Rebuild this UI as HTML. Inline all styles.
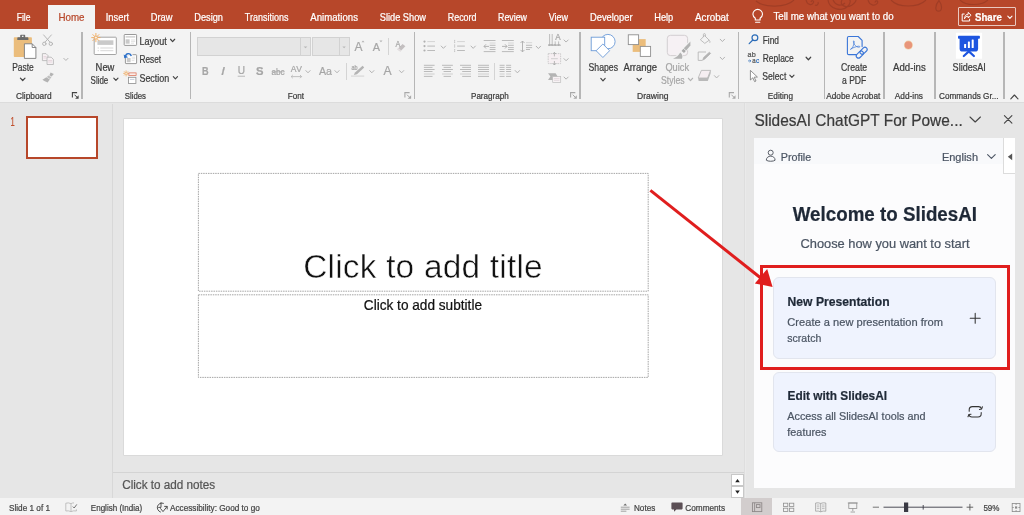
<!DOCTYPE html>
<html lang="en">
<head>
<meta charset="utf-8">
<title>PowerPoint - SlidesAI</title>
<style>
html,body{margin:0;padding:0;}
body{width:1024px;height:515px;position:relative;overflow:hidden;background:#e6e6e6;font-family:"Liberation Sans",sans-serif;}
.a{position:absolute;}
.t{position:absolute;left:0;top:0;white-space:pre;transform-origin:0 0;-webkit-text-stroke:0.9px;font-family:"Liberation Sans",sans-serif;}
svg{position:absolute;overflow:visible;}
#tabbar{left:0;top:0;width:1024px;height:29px;background:#b7472a;}
#hometab{left:48.3px;top:5px;width:46.7px;height:25px;background:#f3f3f3;}
#ribbon{left:0;top:29px;width:1024px;height:72.6px;background:#f3f3f3;border-bottom:1px solid #dcdcdc;}
.gs{position:absolute;top:31.5px;width:1.4px;height:67.3px;background:#b6b6b6;}
.ss{position:absolute;width:1px;background:#d4d4d4;}
#share{left:958.2px;top:7.2px;width:55.6px;height:16.8px;border:1px solid rgba(255,255,255,.7);border-radius:1px;}
.fbox{position:absolute;top:37px;height:18.7px;background:#e6e6e6;border:1px solid #d2d2d2;box-sizing:border-box;}
#thumbdiv{left:112.2px;top:104px;width:1px;height:394px;background:#d8d8d8;}
#thumb{left:26px;top:116px;width:72px;height:42.5px;box-sizing:border-box;border:2px solid #b7472a;background:#fff;}
#slide{left:123.6px;top:118.9px;width:598.4px;height:336px;background:#fff;box-shadow:0 0 0 .6px #d2d2d2;}
.ph{position:absolute;box-sizing:border-box;border:1px dashed #9a9a9a;}
#notesline{left:113px;top:471.6px;width:631.6px;height:1px;background:#d4d4d4;}
.sb{position:absolute;left:730.8px;width:13.4px;height:11.6px;background:#fff;border:1px solid #c8c8c8;box-sizing:border-box;}
#panediv{left:744.3px;top:103px;width:1.2px;height:395px;background:#dedede;box-shadow:1px 0 0 #eaeaea;}
#status{left:0;top:498px;width:1024px;height:17px;background:#f3f3f3;}
#viewsel{left:740.8px;top:498px;width:31.4px;height:17px;background:#d2cdcd;}
#pane{left:754.3px;top:138px;width:261px;height:350px;background:#fcfcfd;}
#panehead{left:754.3px;top:138px;width:248.5px;height:26px;background:#f8f9fb;}
#handle{left:1002.6px;top:138.3px;width:12.6px;height:35.6px;background:#fff;border-left:1px solid #dcdcdc;border-bottom:1px solid #dcdcdc;box-sizing:border-box;}
.card{position:absolute;left:773.3px;width:223.2px;background:#eff3fe;border:1px solid #e2e5ee;border-radius:6px;box-sizing:border-box;}
#redbox{left:760px;top:264.7px;width:250.4px;height:105.6px;box-sizing:border-box;border:3px solid #e01e1e;}
</style>
</head>
<body>
<div class="a" id="tabbar"></div>
<div class="a" id="hometab"></div>
<div class="a" id="ribbon"></div>
<div class="a" id="share"></div>
<!-- group separators -->
<div class="gs" style="left:81.2px"></div>
<div class="gs" style="left:189.9px"></div>
<div class="gs" style="left:413.6px"></div>
<div class="gs" style="left:579.3px"></div>
<div class="gs" style="left:738px"></div>
<div class="gs" style="left:823.6px"></div>
<div class="gs" style="left:883.2px"></div>
<div class="gs" style="left:934.2px"></div>
<div class="gs" style="left:1003.2px"></div>
<div class="ss" style="left:388.2px;top:38px;height:17px"></div>
<div class="ss" style="left:346.2px;top:63px;height:16.6px"></div>
<div class="ss" style="left:494.2px;top:63px;height:17px"></div>
<!-- font boxes -->
<div class="fbox" style="left:197px;width:113.8px"></div>
<div class="ss" style="left:300.2px;top:38px;height:16.7px;background:#d2d2d2"></div>
<div class="fbox" style="left:312px;width:37.6px"></div>
<div class="ss" style="left:339.2px;top:38px;height:16.7px;background:#d2d2d2"></div>
<!-- workspace -->
<div class="a" id="thumbdiv"></div>
<div class="a" id="thumb"></div>
<div class="a" id="slide"></div>
<div class="a" id="notesline"></div>
<div class="sb" style="top:474.4px"></div>
<div class="sb" style="top:486.2px"></div>
<div class="a" id="panediv"></div>
<!-- task pane -->
<div class="a" id="pane"></div>
<div class="a" id="panehead"></div>
<div class="a" id="handle"></div>
<div class="card" style="top:277.2px;height:81.8px"></div>
<div class="card" style="top:371.6px;height:80.8px"></div>
<div class="a" id="redbox"></div>
<!-- status bar -->
<div class="a" id="status"></div>
<div class="a" id="viewsel"></div>
<svg width="1024" height="515" viewBox="0 0 1024 515" style="left:0;top:0">
<g fill="none" stroke="#9d3c25" stroke-width="1.2" opacity="0.85"><path d="M756 1 C764 8 786 8 794 0"/><path d="M806 0 C807 5 812 6 813.5 2.5 C814 0.5 811.5 0 811 2"/><path d="M815 5 C817 6 819 4 818 2"/><path d="M828 0 C829 9 842 13 849 5 C853 -1 846 -5 842 0 C839 5 846 9 852 5 C856 2 856 0 856 0"/><path d="M833 0 C835 5 841 7 845 3"/><path d="M868 0 C869 5 875 7 877.5 3 C878.5 0.5 875.5 0 875 2.5"/><path d="M891 0 C898 8 918 8 926 0"/><path d="M939 0.5 C934.6 5.5 935 11.2 938.6 11.2 C942.2 11.2 942.6 5.5 939 0.5 Z"/><path d="M960 0 C966 6 981 6 988 0"/></g>
<g fill="none" stroke="#fff" stroke-width="1.1" stroke-linecap="round"><path d="M755.3 18.2 C753.3 16.6 752.9 15 752.9 14.2 A4.8 4.8 0 0 1 762.5 14.2 C762.5 15 762.1 16.6 760.1 18.2 V20 H755.3 Z"/><path d="M755.6 22.2 H759.8"/></g>
<g fill="none" stroke="#fff" stroke-width="1" stroke-linejoin="round" stroke-linecap="round"><path d="M964.2 14 H962.2 V21 H969.6 V19.2"/><path d="M964.6 18.4 C964.8 15.4 966.4 14.2 968.2 14.2 V12.4 L971 15.2 L968.2 18 V16.2 C966.6 16.2 965.4 16.8 964.6 18.4 Z"/></g>
<path d="M1007.80 16.10 L1009.90 18.30 L1012.00 16.10" fill="none" stroke="#fff" stroke-width="1.1" stroke-linecap="round" stroke-linejoin="round"/>
<rect x="13.8" y="37.2" width="18.1" height="19.8" rx="0.8" fill="#ebbd7c"/>
<path d="M17.3 40 V38 Q17.3 37.2 18.1 37.2 H20.2 V35.4 Q20.2 34.7 20.9 34.7 H24.5 Q25.2 34.7 25.2 35.4 V37.2 H27.6 Q28.4 37.2 28.4 38 V40 Z" fill="#6b6b6b"/>
<rect x="21.9" y="35.7" width="1.6" height="1.3" fill="#f3f3f3"/>
<path d="M24.4 43.8 H32.2 L35.9 47.5 V58.4 H24.4 Z" fill="#fff" stroke="#7a7a7a" stroke-width="0.9" stroke-linejoin="round"/>
<path d="M32.2 43.8 V47.5 H35.9" fill="none" stroke="#7a7a7a" stroke-width="0.9"/>
<path d="M20.40 78.10 L22.70 80.50 L25.00 78.10" fill="none" stroke="#444444" stroke-width="1.2" stroke-linecap="round" stroke-linejoin="round"/>
<g fill="none" stroke="#b3b3b3" stroke-width="0.95" stroke-linecap="round"><path d="M43.6 34.9 L50 42.2 M51.4 34.9 L45 42.2"/><circle cx="44.3" cy="43.8" r="1.7"/><circle cx="50.8" cy="43.8" r="1.7"/></g>
<g fill="#f6f1f3" stroke="#b3b3b3" stroke-width="0.8" stroke-linejoin="round"><path d="M42.4 53.6 H46 L48 55.6 V60.6 H42.4 Z"/><path d="M47 57.2 H51.2 L53.4 59.4 V64.5 H47 Z"/></g>
<path d="M43.5 56.5 H46.5 M43.5 58 H46.5 M48.2 60.5 H52 M48.2 62 H52" stroke="#d9bfc8" stroke-width="0.5"/>
<path d="M63.80 58.35 L65.90 60.45 L68.00 58.35" fill="none" stroke="#b3b3b3" stroke-width="1" stroke-linecap="round" stroke-linejoin="round"/>
<g fill="#b3b3b3" stroke="none"><path d="M50.6 72.4 L53.8 73.9 L51.6 76.6 L49.4 75.2 Z"/><path d="M48.6 75.4 L51.4 77.2 L50 79 L46.8 77 Z" opacity="0.8"/><path d="M46.4 77.3 L49.8 79.4 L47.6 82.4 Q44.6 81.6 42.4 79.8 Z"/></g>
<path d="M77.10 92.60 H72.40 V97.50" fill="none" stroke="#444" stroke-width="1.1"/>
<path d="M74.50 94.70 L77.30 97.50" fill="none" stroke="#444" stroke-width="1"/><path d="M78.60 95.30 V98.80 H75.10 Z" fill="#444"/>
<rect x="94.2" y="37.2" width="22.1" height="17.3" rx="0.8" fill="#fff" stroke="#9a9a9a" stroke-width="0.9"/>
<rect x="97.4" y="40.3" width="16" height="4.6" fill="#cacaca"/>
<path d="M97.6 48 H99 M100.3 48 H113.3 M97.6 50.7 H99 M100.3 50.7 H113.3" stroke="#c4c4c4" stroke-width="0.7"/>
<g stroke="#f0a95a" stroke-width="0.9" stroke-linecap="round"><path d="M95.9 33.4 V41.8 M91.7 37.6 H100.1 M92.9 34.6 L98.9 40.6 M98.9 34.6 L92.9 40.6"/></g><circle cx="95.9" cy="37.6" r="1.5" fill="#f3f3f3" stroke="#f0a95a" stroke-width="0.8"/>
<path d="M113.80 78.15 L115.90 80.45 L118.00 78.15" fill="none" stroke="#444444" stroke-width="1.15" stroke-linecap="round" stroke-linejoin="round"/>
<rect x="124.2" y="34.5" width="12.4" height="10.9" rx="0.7" fill="#fff" stroke="#8d8d8d" stroke-width="0.9"/>
<rect x="125.6" y="36" width="9.6" height="1.7" fill="#d6d6d6"/><rect x="125.6" y="39.3" width="4" height="4.4" fill="#c9c9c9"/><path d="M131 40 H135.2 M131 41.6 H135.2 M131 43.2 H134" stroke="#cfcfcf" stroke-width="0.6"/>
<path d="M170.50 39.25 L172.60 41.55 L174.70 39.25" fill="none" stroke="#444444" stroke-width="1.15" stroke-linecap="round" stroke-linejoin="round"/>
<rect x="125.4" y="54.7" width="11.2" height="8.9" rx="0.6" fill="#fff" stroke="#8d8d8d" stroke-width="0.9"/>
<rect x="126.8" y="58" width="3.8" height="4.2" fill="#c9c9c9"/><path d="M131.6 57.2 H135.2 M131.6 58.8 H135.2 M131.6 60.6 H134.4" stroke="#cfcfcf" stroke-width="0.6"/>
<path d="M124.6 57.4 C124.4 52.4 130.4 51.6 131.6 56.2" fill="none" stroke="#f3f3f3" stroke-width="3"/>
<path d="M125.6 56.6 C125.6 52.8 130.4 52.6 131.3 56" fill="none" stroke="#2a6fc9" stroke-width="1.4"/><path d="M123.7 54.4 L124.3 58.3 L128.2 57.3 Z" fill="#2a6fc9"/>
<g stroke="#f0a95a" stroke-width="0.7" stroke-linecap="round"><path d="M126.1 70.8 V76 M123.5 73.4 H128.7 M124.3 71.6 L127.9 75.2 M127.9 71.6 L124.3 75.2"/></g><circle cx="126.1" cy="73.4" r="1.1" fill="#f3f3f3" stroke="#f0a95a" stroke-width="0.6"/>
<rect x="128.9" y="72.9" width="7.2" height="2.5" fill="#fbeeea" stroke="#d9694c" stroke-width="0.7"/>
<rect x="128.4" y="77.3" width="7.5" height="6.1" fill="#fff" stroke="#8d8d8d" stroke-width="0.8"/><path d="M130 79.4 H134.4" stroke="#b8c2d0" stroke-width="0.8"/>
<path d="M173.30 76.65 L175.40 78.95 L177.50 76.65" fill="none" stroke="#444444" stroke-width="1.15" stroke-linecap="round" stroke-linejoin="round"/>
<path d="M303.6 46.4 H307.4 L305.5 48.2 Z M342.4 46.4 H345.8 L344.1 48.2 Z" fill="#b8b8b8"/>
<path d="M361.5 42.2 L363 40.6 L364.5 42.2 Z M379.4 40.6 H382.5 L380.95 42.3 Z" fill="#b3b3b3"/>
<path d="M397.3 49.2 L402.6 43.9 L405.4 46.2 L400.2 51.6 Z" fill="#c3bfc0"/><path d="M397.3 49.2 L398.5 48 L401.4 50.4 L400.2 51.6 Z" fill="#e4dfe1"/>
<path d="M291.2 76.6 H301.6 M292.8 75 L291.2 76.6 L292.8 78.2 M300 75 L301.6 76.6 L300 78.2" fill="none" stroke="#b3b3b3" stroke-width="0.8"/>
<path d="M305.90 70.60 L308.00 72.80 L310.10 70.60" fill="none" stroke="#b3b3b3" stroke-width="1" stroke-linecap="round" stroke-linejoin="round"/>
<path d="M334.90 70.60 L337.00 72.80 L339.10 70.60" fill="none" stroke="#b3b3b3" stroke-width="1" stroke-linecap="round" stroke-linejoin="round"/>
<path d="M353.8 75 L355 72.6 L362.6 65.8 L364.2 67.4 L357 74.2 Z" fill="#b3b3b3"/><rect x="351" y="75.3" width="13.2" height="1.6" fill="#dedede"/>
<path d="M369.70 70.60 L371.80 72.80 L373.90 70.60" fill="none" stroke="#b3b3b3" stroke-width="1" stroke-linecap="round" stroke-linejoin="round"/>
<path d="M399.50 70.60 L401.60 72.80 L403.70 70.60" fill="none" stroke="#b3b3b3" stroke-width="1" stroke-linecap="round" stroke-linejoin="round"/>
<path d="M409.60 92.60 H404.90 V97.50" fill="none" stroke="#a8a8a8" stroke-width="1.1"/>
<path d="M407.00 94.70 L409.80 97.50" fill="none" stroke="#a8a8a8" stroke-width="1"/><path d="M411.10 95.30 V98.80 H407.60 Z" fill="#a8a8a8"/>
<circle cx="424.5" cy="41.6" r="1.1" fill="#b0b0b0"/>
<circle cx="424.5" cy="46.1" r="1.1" fill="#b0b0b0"/>
<circle cx="424.5" cy="50.5" r="1.1" fill="#b0b0b0"/>
<path d="M427.30 41.60 H435.00" stroke="#d0d0d0" stroke-width="0.9" fill="none"/>
<path d="M427.30 46.10 H435.00 M427.30 50.50 H435.00" stroke="#b4b4b4" stroke-width="0.9" fill="none"/>
<path d="M441.20 46.05 L443.40 48.35 L445.60 46.05" fill="none" stroke="#b3b3b3" stroke-width="1" stroke-linecap="round" stroke-linejoin="round"/>
<path d="M454.00 40.40 H455.20 M454.00 42.60 H455.20 M454.00 45.00 H455.20 M454.00 47.00 H455.20 M454.00 49.60 H455.20 M454.00 51.60 H455.20" stroke="#bdbdbd" stroke-width="0.6" fill="none"/>
<path d="M454.6 40 V43 M454.6 44.6 V47.4 M454.6 49.2 V52" stroke="#c0c0c0" stroke-width="0.6"/>
<path d="M457.10 41.60 H464.90" stroke="#d0d0d0" stroke-width="0.9" fill="none"/>
<path d="M457.10 46.10 H464.90 M457.10 50.50 H464.90" stroke="#b4b4b4" stroke-width="0.9" fill="none"/>
<path d="M471.00 46.05 L473.20 48.35 L475.40 46.05" fill="none" stroke="#b3b3b3" stroke-width="1" stroke-linecap="round" stroke-linejoin="round"/>
<path d="M483.70 40.50 H495.50 M483.70 51.60 H495.50" stroke="#b4b4b4" stroke-width="0.9" fill="none"/>
<path d="M489.70 43.00 H495.50" stroke="#d4d4d4" stroke-width="0.9" fill="none"/>
<path d="M489.70 45.30 H495.50 M489.70 47.60 H495.50 M489.70 49.50 H495.50" stroke="#b4b4b4" stroke-width="0.9" fill="none"/>
<path d="M484 46.4 H489 M486 44.3 L484 46.4 L486 48.5" fill="none" stroke="#adadad" stroke-width="0.9"/>
<path d="M501.90 40.50 H513.80 M501.90 51.60 H513.80" stroke="#b4b4b4" stroke-width="0.9" fill="none"/>
<path d="M508.00 43.00 H513.80" stroke="#d4d4d4" stroke-width="0.9" fill="none"/>
<path d="M508.00 45.30 H513.80 M508.00 47.60 H513.80 M508.00 49.50 H513.80" stroke="#b4b4b4" stroke-width="0.9" fill="none"/>
<path d="M502 46.4 H507 M505 44.3 L507 46.4 L505 48.5" fill="none" stroke="#adadad" stroke-width="0.9"/>
<path d="M522.5 41 V51.9 M520.5 43 L522.5 41 L524.5 43 M520.5 49.9 L522.5 51.9 L524.5 49.9" fill="none" stroke="#adadad" stroke-width="0.9"/>
<path d="M526.00 42.70 H532.10" stroke="#d4d4d4" stroke-width="0.9" fill="none"/>
<path d="M526.00 45.30 H532.10 M526.00 47.60 H532.10" stroke="#b4b4b4" stroke-width="0.9" fill="none"/>
<path d="M526.00 49.50 H530.00" stroke="#b4b4b4" stroke-width="0.9" fill="none"/>
<path d="M536.20 46.25 L538.40 48.55 L540.60 46.25" fill="none" stroke="#b3b3b3" stroke-width="1" stroke-linecap="round" stroke-linejoin="round"/>
<path d="M423.90 65.30 H434.60 M423.90 69.50 H434.60" stroke="#b4b4b4" stroke-width="0.9" fill="none"/>
<path d="M423.90 67.40 H432.50 M423.90 71.50 H432.50 M423.90 76.40 H432.50" stroke="#b4b4b4" stroke-width="0.9" fill="none"/>
<path d="M423.90 74.00 H434.60" stroke="#d6d6d6" stroke-width="1.2" fill="none"/>
<path d="M442.00 65.30 H452.90 M442.00 69.50 H452.90" stroke="#b4b4b4" stroke-width="0.9" fill="none"/>
<path d="M443.60 67.40 H451.00 M443.60 71.50 H451.00 M443.60 76.40 H451.00" stroke="#b4b4b4" stroke-width="0.9" fill="none"/>
<path d="M442.00 74.00 H452.90" stroke="#d6d6d6" stroke-width="1.2" fill="none"/>
<path d="M460.00 65.30 H471.00 M460.00 69.50 H471.00" stroke="#b4b4b4" stroke-width="0.9" fill="none"/>
<path d="M462.20 67.40 H471.00 M462.20 71.50 H471.00 M462.20 76.40 H471.00" stroke="#b4b4b4" stroke-width="0.9" fill="none"/>
<path d="M460.00 74.00 H471.00" stroke="#d6d6d6" stroke-width="1.2" fill="none"/>
<path d="M478.00 65.30 H489.00 M478.00 69.50 H489.00" stroke="#b4b4b4" stroke-width="0.9" fill="none"/>
<path d="M478.00 67.40 H489.00 M478.00 71.50 H489.00 M478.00 76.40 H489.00" stroke="#b4b4b4" stroke-width="0.9" fill="none"/>
<path d="M478.00 74.00 H489.00" stroke="#d6d6d6" stroke-width="1.2" fill="none"/>
<path d="M499.60 65.30 H504.60 M499.60 67.40 H504.60 M499.60 69.50 H504.60 M499.60 71.50 H504.60 M499.60 76.40 H504.60" stroke="#b4b4b4" stroke-width="0.9" fill="none"/>
<path d="M499.60 74.00 H504.60" stroke="#d6d6d6" stroke-width="1.2" fill="none"/>
<path d="M506.10 65.30 H511.10 M506.10 67.40 H511.10 M506.10 69.50 H511.10 M506.10 71.50 H511.10 M506.10 76.40 H511.10" stroke="#b4b4b4" stroke-width="0.9" fill="none"/>
<path d="M506.10 74.00 H511.10" stroke="#d6d6d6" stroke-width="1.2" fill="none"/>
<path d="M515.20 70.55 L517.40 72.85 L519.60 70.55" fill="none" stroke="#b3b3b3" stroke-width="1" stroke-linecap="round" stroke-linejoin="round"/>
<path d="M549.6 34 V45.6 M552.2 34 V45.6 M555.2 41.4 V45.6 M558.6 41.4 V45.6" stroke="#b0b0b0" stroke-width="0.8" fill="none"/>
<path d="M548 45.2 H560.8" stroke="#a8a8a8" stroke-width="1"/>
<path d="M548.6 44 L549.6 45.4 L550.6 44 M551.2 44 L552.2 45.4 L553.2 44 M554.2 44 L555.2 45.4 L556.2 44 M557.6 44 L558.6 45.4 L559.6 44" fill="none" stroke="#a8a8a8" stroke-width="0.7"/>
<path d="M564.00 39.95 L566.10 42.05 L568.20 39.95" fill="none" stroke="#b3b3b3" stroke-width="1" stroke-linecap="round" stroke-linejoin="round"/>
<rect x="548.2" y="53.6" width="12.4" height="10" fill="#f6eff2" stroke="#bdbdbd" stroke-width="0.7" stroke-dasharray="1.6 0.8"/>
<path d="M554.4 52.4 V56.4 M552.8 54 L554.4 52.4 L556 54 M554.4 61 V65 M552.8 63.4 L554.4 65 L556 63.4" fill="none" stroke="#a8a8a8" stroke-width="0.8"/><path d="M551 58.7 H557.8" stroke="#cfcfcf" stroke-width="1"/>
<path d="M564.00 58.65 L566.10 60.75 L568.20 58.65" fill="none" stroke="#b3b3b3" stroke-width="1" stroke-linecap="round" stroke-linejoin="round"/>
<path d="M548 73.2 H555.6 L557.6 76.5 L555.6 79.9 H548 L550.4 76.5 Z" fill="#b4b4b4"/><rect x="552.7" y="76.6" width="8" height="5.8" fill="#f7f2f4" stroke="#bdbdbd" stroke-width="0.7"/><path d="M554 78.6 H559.4 M554 80.4 H559.4" stroke="#d2c4ca" stroke-width="0.5"/>
<path d="M564.00 77.05 L566.10 79.15 L568.20 77.05" fill="none" stroke="#b3b3b3" stroke-width="1" stroke-linecap="round" stroke-linejoin="round"/>
<path d="M575.30 92.60 H570.60 V97.50" fill="none" stroke="#a8a8a8" stroke-width="1.1"/>
<path d="M572.70 94.70 L575.50 97.50" fill="none" stroke="#a8a8a8" stroke-width="1"/><path d="M576.80 95.30 V98.80 H573.30 Z" fill="#a8a8a8"/>
<circle cx="607.9" cy="41.6" r="7.2" fill="#fff" stroke="#6c9bd8" stroke-width="0.9"/>
<rect x="591.2" y="37.2" width="13.5" height="13.5" fill="#fff" stroke="#6c9bd8" stroke-width="0.9"/>
<path d="M602.9 44 L609.6 50.7 L602.9 57.5 L596.1 50.7 Z" fill="#fff" stroke="#6c9bd8" stroke-width="0.9" stroke-linejoin="round"/>
<path d="M600.80 78.40 L603.00 80.80 L605.20 78.40" fill="none" stroke="#444444" stroke-width="1.2" stroke-linecap="round" stroke-linejoin="round"/>
<rect x="632.7" y="39.1" width="13" height="12.8" fill="#ebbd7c"/>
<rect x="628.3" y="34.8" width="10.3" height="9.8" fill="#fff" stroke="#8f8f8f" stroke-width="0.9"/>
<rect x="640.3" y="46.4" width="10.3" height="10" fill="#fff" stroke="#8f8f8f" stroke-width="0.9"/>
<path d="M637.00 78.40 L639.20 80.80 L641.40 78.40" fill="none" stroke="#444444" stroke-width="1.2" stroke-linecap="round" stroke-linejoin="round"/>
<rect x="667.3" y="35.3" width="20.3" height="20.3" rx="3.2" fill="#f6f1f4" stroke="#cfcbcd" stroke-width="0.9"/>
<g stroke="#f3f3f3" stroke-width="1.8" stroke-linejoin="round" fill="#f3f3f3"><path d="M690.4 41.4 V45.6 L686.2 50.4 L683.8 48.2 Z"/><path d="M683.4 48.8 L685.8 50.9 L684 53.1 L681.6 51 Z"/><path d="M673 58.7 Q678 56.6 680.2 52.4 Q683.4 54.6 682 58.7 Z"/></g>
<path d="M690.4 41.4 V45.6 L686.2 50.4 L683.8 48.2 Z" fill="#b2b2b2"/><path d="M683.4 48.8 L685.8 50.9 L684 53.1 L681.6 51 Z" fill="#a8a8a8"/><path d="M673 58.7 Q678 56.6 680.2 52.4 Q683.4 54.6 682 58.7 Z" fill="#b4b4b4"/>
<path d="M688.35 78.25 L690.50 80.55 L692.65 78.25" fill="none" stroke="#b3b3b3" stroke-width="1.1" stroke-linecap="round" stroke-linejoin="round"/>
<g fill="none" stroke="#b3b3b3" stroke-width="0.85" stroke-linejoin="round"><path d="M704.6 35.6 L709.2 40.2 L704.8 43.4 L700.4 39.8 Z"/><path d="M703.4 37 V34.6 Q703.4 33.6 704.4 33.6 Q705.4 33.6 705.4 34.6 V36.4"/><path d="M709.2 40.2 Q710.4 41.6 709.8 42.8"/></g>
<path d="M720.20 39.25 L722.40 41.55 L724.60 39.25" fill="none" stroke="#b3b3b3" stroke-width="1" stroke-linecap="round" stroke-linejoin="round"/>
<g fill="none" stroke="#b3b3b3" stroke-width="0.85" stroke-linejoin="round"><path d="M706 52 H698.2 V60.4 H702.6"/><path d="M702.8 60 L703.6 57.6 L709.4 52.2 L710.6 53.4 L704.8 59 Z" fill="#b3b3b3"/></g>
<path d="M720.20 57.25 L722.40 59.55 L724.60 57.25" fill="none" stroke="#b3b3b3" stroke-width="1" stroke-linecap="round" stroke-linejoin="round"/>
<path d="M701.4 70.4 H710.6 L707.6 78 H698.2 Z" fill="#f5eef1" stroke="#b3b3b3" stroke-width="0.8" stroke-linejoin="round"/><path d="M698.2 78 H707.6 L710.6 70.4 V73.4 L707.8 81 H698.6 Z" fill="#b9b9b9"/>
<path d="M714.40 75.65 L716.60 77.95 L718.80 75.65" fill="none" stroke="#b3b3b3" stroke-width="1" stroke-linecap="round" stroke-linejoin="round"/>
<path d="M734.00 92.60 H729.30 V97.50" fill="none" stroke="#a8a8a8" stroke-width="1.1"/>
<path d="M731.40 94.70 L734.20 97.50" fill="none" stroke="#a8a8a8" stroke-width="1"/><path d="M735.50 95.30 V98.80 H732.00 Z" fill="#a8a8a8"/>
<g fill="none" stroke="#2b6cb8" stroke-width="1.2" stroke-linecap="round"><circle cx="754.9" cy="37.7" r="2.9"/><path d="M752.8 40 L749.2 43.7"/></g>
<path d="M748 60.9 H750.8 M749.6 59.7 L750.9 60.9 L749.6 62.1" fill="none" stroke="#2b6cb8" stroke-width="0.7"/>
<path d="M806.10 57.25 L808.40 59.75 L810.70 57.25" fill="none" stroke="#444444" stroke-width="1.2" stroke-linecap="round" stroke-linejoin="round"/>
<path d="M750.4 70.4 V80 L752.8 77.8 L754.6 81.6 L756 81 L754.2 77.2 L757.4 77 Z" fill="#fff" stroke="#777" stroke-width="0.8" stroke-linejoin="round"/>
<path d="M789.80 75.05 L791.90 77.35 L794.00 75.05" fill="none" stroke="#444444" stroke-width="1.15" stroke-linecap="round" stroke-linejoin="round"/>
<path d="M856.4 54.6 H848.8 Q847.4 54.6 847.4 53.2 V37.9 Q847.4 36.5 848.8 36.5 H858.2 L862.1 40.4 V46.6" fill="none" stroke="#3a76d8" stroke-width="1.1" stroke-linejoin="round" stroke-linecap="round"/>
<path d="M850.4 49.4 C852.6 48.6 854.2 44.4 854.2 41.6 C854.2 40.4 853.2 40.6 853.4 41.8 C853.8 44.6 856.6 47.6 859.4 47.2 C860.4 46.9 859.6 46 858.4 46.2 C855.6 46.6 852.2 48 850.4 49.4 Z" fill="none" stroke="#3a76d8" stroke-width="0.7"/>
<g fill="none" stroke="#3a76d8" stroke-width="1.1"><rect x="-2.2" y="-4.1" width="4.4" height="8.2" rx="2.2" transform="translate(863.6 50.8) rotate(45)"/><rect x="-2.2" y="-4.1" width="4.4" height="8.2" rx="2.2" transform="translate(859.8 54.6) rotate(45)"/></g>
<circle cx="908.4" cy="45.1" r="4.5" fill="#f0b46a" opacity="0.55"/><circle cx="908.4" cy="45.1" r="3.8" fill="#e8957a"/>
<rect x="955.9" y="32.7" width="26.2" height="26" fill="#fff"/>
<rect x="958" y="35.7" width="21.9" height="3" rx="0.8" fill="#1d55e0"/><path d="M959.6 38 H978.1 V48.4 Q978.1 51.6 974.9 51.6 H962.8 Q959.6 51.6 959.6 48.4 Z" fill="#1d55e0"/>
<path d="M963.8 56 L968.85 51.4 L973.9 56" fill="none" stroke="#1d55e0" stroke-width="2.2" stroke-linecap="round" stroke-linejoin="round"/>
<rect x="964.1" y="44" width="2" height="4" rx="0.5" fill="#fff"/><rect x="967.9" y="41.6" width="2" height="6.4" rx="0.5" fill="#fff"/><rect x="971.7" y="39.6" width="2" height="8.4" rx="0.5" fill="#fff"/>
<path d="M1010.8 98.8 L1014.4 95 L1018 98.8" fill="none" stroke="#444444" stroke-width="1.1" stroke-linecap="round" stroke-linejoin="round"/>
<path d="M735.2 482.2 L737.5 479 L739.8 482.2 Z M735.2 490.6 H739.8 L737.5 493.8 Z" fill="#222"/>
<path d="M970 117 L975.2 122 L980.4 117" fill="none" stroke="#444" stroke-width="1.1" stroke-linecap="round" stroke-linejoin="round"/>
<path d="M1004.4 115.6 L1011.9 123.1 M1011.9 115.6 L1004.4 123.1" fill="none" stroke="#444" stroke-width="1.1" stroke-linecap="round"/>
<g fill="none" stroke="#5a5f68" stroke-width="1"><circle cx="770.7" cy="152.7" r="2.5"/><path d="M766.3 160.2 C766.3 154.8 775.1 154.8 775.1 160.2 C773.6 161.6 767.8 161.6 766.3 160.2 Z" stroke-linejoin="round"/></g>
<path d="M987.6 154.6 L991.4 158.4 L995.2 154.6" fill="none" stroke="#4b5563" stroke-width="1.1" stroke-linecap="round" stroke-linejoin="round"/>
<path d="M1012.2 153.4 V160.2 L1007.8 156.8 Z" fill="#555"/>
<path d="M970.2 318.2 H980.2 M975.2 313.2 V323.2" stroke="#333" stroke-width="1.05" stroke-linecap="round"/>
<g fill="none" stroke="#333" stroke-width="1.05" stroke-linecap="round" stroke-linejoin="round"><path d="M969.2 411.2 V409.8 Q969.2 406.6 972.4 406.6 H978.6 Q980.8 406.6 981.4 408.6"/><path d="M979.4 409.4 L981.6 409 L982.4 406.8"/><path d="M981.2 412.4 V413.8 Q981.2 417 978 417 H971.8 Q969.6 417 969 415"/><path d="M971 414.2 L968.8 414.6 L968 416.8"/></g>
<path d="M650.4 190.3 L762 279" stroke="#e01e1e" stroke-width="3"/>
<path d="M772.6 287 L754.8 283.4 L767.2 269 Z" fill="#e01e1e"/>
<path d="M71 503.6 V511.6 M71 503.6 Q68.4 502.4 65.8 503.2 V511 Q68.4 510.4 71 511.6 Q73.6 510.4 76.4 511 V509.4 M71 503.6 Q72.6 502.8 74 502.9" fill="none" stroke="#b4b4b4" stroke-width="0.8"/>
<path d="M72.8 506.6 L74.2 508 L76.8 504.4" fill="none" stroke="#666" stroke-width="0.9"/>
<g fill="none" stroke="#4a4a4a" stroke-width="0.95" stroke-linecap="round" stroke-linejoin="round"><path d="M163.4 503.3 A4.6 4.6 0 1 0 160.4 512"/><path d="M161 502.6 V507.4 H158.6"/><path d="M160.6 508.6 L163 511.6 L167 506.6"/><path d="M164.6 506.4 L167.2 506.4 L167.2 509"/></g>
<path d="M620.8 507.2 H629.6 M620.8 509.2 H629.6 M620.8 511.2 H626.4" stroke="#8a8a8a" stroke-width="0.8"/><path d="M623.4 505.4 L625.2 503.4 L627 505.4 Z" fill="#6a6a6a"/>
<path d="M672.2 502.4 H681.8 Q682.6 502.4 682.6 503.2 V508.6 Q682.6 509.4 681.8 509.4 H676.4 L674 511.8 V509.4 H672.2 Q671.4 509.4 671.4 508.6 V503.2 Q671.4 502.4 672.2 502.4 Z" fill="#5b4f55"/>
<g fill="none" stroke="#8c8686" stroke-width="0.85"><rect x="752.4" y="502.8" width="9.4" height="8.8"/><path d="M754.6 502.8 V511.6"/><rect x="756.4" y="504.6" width="3.6" height="3"/></g>
<g fill="none" stroke="#8f8f8f" stroke-width="0.8"><rect x="783.6" y="503.2" width="4.2" height="3.2"/><rect x="789.6" y="503.2" width="4.2" height="3.2"/><rect x="783.6" y="508.2" width="4.2" height="3.2"/><rect x="789.6" y="508.2" width="4.2" height="3.2"/></g>
<g fill="none" stroke="#9a9a9a" stroke-width="0.75"><path d="M820.7 503.4 V511.8 M820.7 503.4 Q818.2 502.4 815.6 503 V511.2 Q818.2 510.6 820.7 511.8 Q823.2 510.6 825.8 511.2 V503 Q823.2 502.4 820.7 503.4"/><path d="M816.8 505 H819.4 M816.8 506.8 H819.4 M816.8 508.6 H819.4 M822 505 H824.6 M822 506.8 H824.6 M822 508.6 H824.6" stroke-width="0.6"/></g>
<g fill="none" stroke="#8f8f8f" stroke-width="0.8"><path d="M847.8 503 H857.8"/><rect x="848.8" y="503" width="8" height="5.4"/><path d="M852.8 508.4 V511 M850.6 512 H855"/></g>
<path d="M872.8 507.2 H879" stroke="#666" stroke-width="0.9"/>
<path d="M883.5 507.2 H962.5" stroke="#3a3a44" stroke-width="0.9"/><path d="M923.2 505 V509.6" stroke="#3a3a44" stroke-width="0.9"/>
<rect x="904" y="502.5" width="4.2" height="9.5" fill="#3a3a44"/>
<path d="M966.6 507.2 H973.2 M969.9 503.9 V510.5" stroke="#555" stroke-width="0.9"/>
<g fill="none" stroke="#8a8a8a" stroke-width="0.8"><rect x="1012.2" y="503.4" width="7.8" height="8.2"/><path d="M1016.1 503.4 V505 M1016.1 510 V511.6 M1012.2 507.5 H1013.8 M1018.4 507.5 H1020"/></g><rect x="1015" y="506.4" width="2.2" height="2.2" fill="#8a8a8a"/>
<g fill="none" stroke="#8e8e8e" stroke-width="0.8" stroke-dasharray="1.5 0.9"><rect x="198.4" y="173.4" width="449.8" height="117.8"/><rect x="198.4" y="294.8" width="449.8" height="82.6"/></g>
</svg>

<div id="txt" style="position:absolute;left:0;top:0;width:1024px;height:515px;will-change:transform;">
<span class="t" style="font-size:40.8px;line-height:48px;color:#ffffff;transform:translate(16.75px,11.00px) scale(0.2091,0.25);">File</span>
<span class="t" style="font-size:40.8px;line-height:48px;color:#b7472a;transform:translate(58.50px,11.00px) scale(0.2389,0.25);">Home</span>
<span class="t" style="font-size:40.8px;line-height:48px;color:#ffffff;transform:translate(105.75px,11.00px) scale(0.2298,0.25);">Insert</span>
<span class="t" style="font-size:40.8px;line-height:48px;color:#ffffff;transform:translate(150.75px,11.00px) scale(0.2285,0.25);">Draw</span>
<span class="t" style="font-size:40.8px;line-height:48px;color:#ffffff;transform:translate(194.25px,11.00px) scale(0.2264,0.25);">Design</span>
<span class="t" style="font-size:40.8px;line-height:48px;color:#ffffff;transform:translate(244.75px,11.00px) scale(0.2209,0.25);">Transitions</span>
<span class="t" style="font-size:40.8px;line-height:48px;color:#ffffff;transform:translate(310.25px,11.00px) scale(0.2366,0.25);">Animations</span>
<span class="t" style="font-size:40.8px;line-height:48px;color:#ffffff;transform:translate(379.75px,11.00px) scale(0.2266,0.25);">Slide Show</span>
<span class="t" style="font-size:40.8px;line-height:48px;color:#ffffff;transform:translate(447.75px,11.00px) scale(0.2186,0.25);">Record</span>
<span class="t" style="font-size:40.8px;line-height:48px;color:#ffffff;transform:translate(498.00px,11.00px) scale(0.2168,0.25);">Review</span>
<span class="t" style="font-size:40.8px;line-height:48px;color:#ffffff;transform:translate(548.75px,11.00px) scale(0.2195,0.25);">View</span>
<span class="t" style="font-size:40.8px;line-height:48px;color:#ffffff;transform:translate(590.00px,11.00px) scale(0.2285,0.25);">Developer</span>
<span class="t" style="font-size:40.8px;line-height:48px;color:#ffffff;transform:translate(654.25px,11.00px) scale(0.2264,0.25);">Help</span>
<span class="t" style="font-size:40.8px;line-height:48px;color:#ffffff;transform:translate(695.00px,11.00px) scale(0.2400,0.25);">Acrobat</span>
<span class="t" style="font-size:40.4px;line-height:48px;color:#ffffff;transform:translate(773.40px,10.90px) scale(0.2412,0.25);">Tell me what you want to do</span>
<span class="t" style="font-size:42.8px;line-height:50px;color:#ffffff;transform:translate(975.00px,10.90px) scale(0.2253,0.25);font-weight:700;">Share</span>
<span class="t" style="font-size:40.8px;line-height:48px;color:#3b3b3b;transform:translate(12.20px,61.50px) scale(0.2066,0.25);">Paste</span>
<span class="t" style="font-size:40.8px;line-height:48px;color:#3b3b3b;transform:translate(95.60px,61.40px) scale(0.2303,0.25);">New</span>
<span class="t" style="font-size:40.8px;line-height:48px;color:#3b3b3b;transform:translate(90.60px,74.30px) scale(0.1940,0.25);">Slide</span>
<span class="t" style="font-size:40.8px;line-height:48px;color:#3b3b3b;transform:translate(139.50px,35.30px) scale(0.2220,0.25);">Layout</span>
<span class="t" style="font-size:40.8px;line-height:48px;color:#3b3b3b;transform:translate(139.50px,53.70px) scale(0.2017,0.25);">Reset</span>
<span class="t" style="font-size:40.8px;line-height:48px;color:#3b3b3b;transform:translate(139.40px,72.60px) scale(0.2197,0.25);">Section</span>
<span class="t" style="font-size:40.8px;line-height:48px;color:#3b3b3b;transform:translate(588.50px,61.50px) scale(0.2132,0.25);">Shapes</span>
<span class="t" style="font-size:40.8px;line-height:48px;color:#3b3b3b;transform:translate(623.40px,61.50px) scale(0.2315,0.25);">Arrange</span>
<span class="t" style="font-size:40.8px;line-height:48px;color:#a6a6a6;transform:translate(665.40px,61.50px) scale(0.2263,0.25);">Quick</span>
<span class="t" style="font-size:40.8px;line-height:48px;color:#a6a6a6;transform:translate(661.00px,74.30px) scale(0.2133,0.25);">Styles</span>
<span class="t" style="font-size:40.8px;line-height:48px;color:#3b3b3b;transform:translate(762.75px,34.80px) scale(0.2047,0.25);">Find</span>
<span class="t" style="font-size:40.8px;line-height:48px;color:#3b3b3b;transform:translate(762.75px,52.80px) scale(0.2074,0.25);">Replace</span>
<span class="t" style="font-size:40.8px;line-height:48px;color:#3b3b3b;transform:translate(762.30px,70.90px) scale(0.2117,0.25);">Select</span>
<span class="t" style="font-size:40.8px;line-height:48px;color:#3b3b3b;transform:translate(841.00px,61.50px) scale(0.2140,0.25);">Create</span>
<span class="t" style="font-size:40.8px;line-height:48px;color:#3b3b3b;transform:translate(842.00px,74.30px) scale(0.2097,0.25);">a PDF</span>
<span class="t" style="font-size:40.8px;line-height:48px;color:#3b3b3b;transform:translate(893.00px,61.50px) scale(0.2368,0.25);">Add-ins</span>
<span class="t" style="font-size:40.8px;line-height:48px;color:#3b3b3b;transform:translate(952.60px,61.50px) scale(0.2215,0.25);">SlidesAI</span>
<span class="t" style="font-size:34.8px;line-height:40px;color:#3b3b3b;transform:translate(16.00px,90.80px) scale(0.2390,0.25);">Clipboard</span>
<span class="t" style="font-size:34.8px;line-height:40px;color:#3b3b3b;transform:translate(124.70px,90.80px) scale(0.2247,0.25);">Slides</span>
<span class="t" style="font-size:34.8px;line-height:40px;color:#3b3b3b;transform:translate(287.75px,90.80px) scale(0.2333,0.25);">Font</span>
<span class="t" style="font-size:34.8px;line-height:40px;color:#3b3b3b;transform:translate(471.00px,90.80px) scale(0.2320,0.25);">Paragraph</span>
<span class="t" style="font-size:34.8px;line-height:40px;color:#3b3b3b;transform:translate(637.00px,90.80px) scale(0.2460,0.25);">Drawing</span>
<span class="t" style="font-size:34.8px;line-height:40px;color:#3b3b3b;transform:translate(767.80px,90.80px) scale(0.2368,0.25);">Editing</span>
<span class="t" style="font-size:34.8px;line-height:40px;color:#3b3b3b;transform:translate(826.30px,90.80px) scale(0.2365,0.25);">Adobe Acrobat</span>
<span class="t" style="font-size:34.8px;line-height:40px;color:#3b3b3b;transform:translate(894.80px,90.80px) scale(0.2390,0.25);">Add-ins</span>
<span class="t" style="font-size:34.8px;line-height:40px;color:#3b3b3b;transform:translate(939.00px,90.80px) scale(0.2349,0.25);">Commands Gr...</span>
<span class="t" style="font-size:46px;line-height:54px;color:#a6a6a6;transform:translate(202.00px,63.75px) scale(0.1986,0.25);font-weight:700;">B</span>
<span class="t" style="font-size:46px;line-height:54px;color:#a6a6a6;transform:translate(221.00px,63.75px) scale(0.3130,0.25);font-style:italic;">I</span>
<span class="t" style="font-size:44px;line-height:51px;color:#a6a6a6;transform:translate(237.70px,64.05px) scale(0.2297,0.25);text-decoration:underline;text-decoration-thickness:3px;text-underline-offset:6px;">U</span>
<span class="t" style="font-size:46px;line-height:54px;color:#a6a6a6;transform:translate(256.00px,63.75px) scale(0.2444,0.25);font-weight:700;">S</span>
<span class="t" style="font-size:36px;line-height:43px;color:#a6a6a6;transform:translate(271.50px,66.00px) scale(0.2257,0.25);text-decoration:line-through;text-decoration-thickness:3px;">abc</span>
<span class="t" style="font-size:34px;line-height:40px;color:#a6a6a6;letter-spacing:2.16px;transform:translate(290.75px,64.00px) scale(0.2500,0.25);">AV</span>
<span class="t" style="font-size:46px;line-height:54px;color:#a6a6a6;transform:translate(319.00px,63.75px) scale(0.2310,0.25);">Aa</span>
<span class="t" style="font-size:52px;line-height:60px;color:#a6a6a6;transform:translate(354.50px,39.00px) scale(0.2306,0.25);">A</span>
<span class="t" style="font-size:46px;line-height:54px;color:#a6a6a6;transform:translate(372.75px,40.25px) scale(0.2363,0.25);">A</span>
<span class="t" style="font-size:50px;line-height:58px;color:#a6a6a6;transform:translate(383.40px,63.00px) scale(0.2428,0.25);">A</span>
<span class="t" style="font-size:50.4px;line-height:59px;color:#c0502e;transform:translate(10.60px,113.95px) scale(0.1498,0.25);">1</span>
<span class="t" style="font-size:48px;line-height:55px;color:#555555;transform:translate(122.20px,478.20px) scale(0.2437,0.25);">Click to add notes</span>
<span class="t" style="font-size:34.4px;line-height:40px;color:#444444;transform:translate(9.00px,502.90px) scale(0.2383,0.25);">Slide 1 of 1</span>
<span class="t" style="font-size:34.4px;line-height:40px;color:#444444;transform:translate(90.80px,502.90px) scale(0.2338,0.25);">English (India)</span>
<span class="t" style="font-size:34.4px;line-height:40px;color:#444444;transform:translate(170.00px,502.90px) scale(0.2385,0.25);">Accessibility: Good to go</span>
<span class="t" style="font-size:34.4px;line-height:40px;color:#444444;transform:translate(634.00px,502.90px) scale(0.2360,0.25);">Notes</span>
<span class="t" style="font-size:34.4px;line-height:40px;color:#444444;transform:translate(685.30px,502.90px) scale(0.2388,0.25);">Comments</span>
<span class="t" style="font-size:34.4px;line-height:40px;color:#444444;transform:translate(983.40px,502.90px) scale(0.2339,0.25);">59%</span>
<span class="t" style="font-size:56.8px;line-height:65px;color:#111111;transform:translate(363.80px,296.90px) scale(0.2400,0.25);">Click to add subtitle</span>
<span class="t" style="font-size:64.8px;line-height:75px;color:#3a3a3a;transform:translate(754.40px,111.30px) scale(0.2384,0.25);">SlidesAI ChatGPT For Powe...</span>
<span class="t" style="font-size:44.8px;line-height:52px;color:#4b5563;transform:translate(780.70px,150.20px) scale(0.2402,0.25);">Profile</span>
<span class="t" style="font-size:44.8px;line-height:52px;color:#4b5563;transform:translate(941.90px,150.20px) scale(0.2457,0.25);">English</span>
<span class="t" style="font-size:78.4px;line-height:90px;color:#1f2937;transform:translate(792.70px,203.30px) scale(0.2395,0.25);font-weight:700;">Welcome to SlidesAI</span>
<span class="t" style="font-size:52px;line-height:60px;color:#4b5563;transform:translate(800.50px,235.60px) scale(0.2468,0.25);">Choose how you want to start</span>
<span class="t" style="font-size:51.2px;line-height:59px;color:#1f2937;transform:translate(787.50px,293.75px) scale(0.2377,0.25);font-weight:700;">New Presentation</span>
<span class="t" style="font-size:46px;line-height:54px;color:#4b5563;transform:translate(787.30px,315.25px) scale(0.2416,0.25);">Create a new presentation from</span>
<span class="t" style="font-size:46px;line-height:54px;color:#4b5563;transform:translate(787.30px,330.85px) scale(0.2290,0.25);">scratch</span>
<span class="t" style="font-size:51.2px;line-height:59px;color:#1f2937;transform:translate(787.50px,387.95px) scale(0.2319,0.25);font-weight:700;">Edit with SlidesAI</span>
<span class="t" style="font-size:46px;line-height:54px;color:#4b5563;transform:translate(787.30px,409.05px) scale(0.2350,0.25);">Access all SlidesAI tools and</span>
<span class="t" style="font-size:46px;line-height:54px;color:#4b5563;transform:translate(787.30px,424.75px) scale(0.2358,0.25);">features</span>
<span class="t" style="font-size:25.6px;line-height:30px;color:#a6a6a6;transform:translate(351.40px,63.60px) scale(0.2143,0.25);">ab</span>
<span class="t" style="font-size:29.6px;line-height:35px;color:#555;transform:translate(747.60px,50.40px) scale(0.2460,0.25);">ab</span>
<span class="t" style="font-size:29.6px;line-height:35px;color:#555;transform:translate(752.20px,55.60px) scale(0.2065,0.25);">a</span>
<span class="t" style="font-size:29.6px;line-height:35px;color:#2b6cb8;transform:translate(755.90px,55.60px) scale(0.2230,0.25);">c</span>
<span class="t" style="font-size:32.8px;line-height:39px;color:#a6a6a6;transform:translate(395.60px,39.15px) scale(0.2238,0.25);">A</span>
<span class="t" style="font-size:133.6px;line-height:151px;color:#111;letter-spacing:0.86px;transform:translate(303.20px,247.90px) scale(0.2500,0.25);font-weight:400;-webkit-text-stroke:2px #fff;">Click to add title</span>
<span class="t" style="font-size:34.4px;line-height:40px;color:#a6a6a6;transform:translate(555.20px,32.40px) scale(0.2353,0.25);">A</span>
</div>
</body>
</html>
